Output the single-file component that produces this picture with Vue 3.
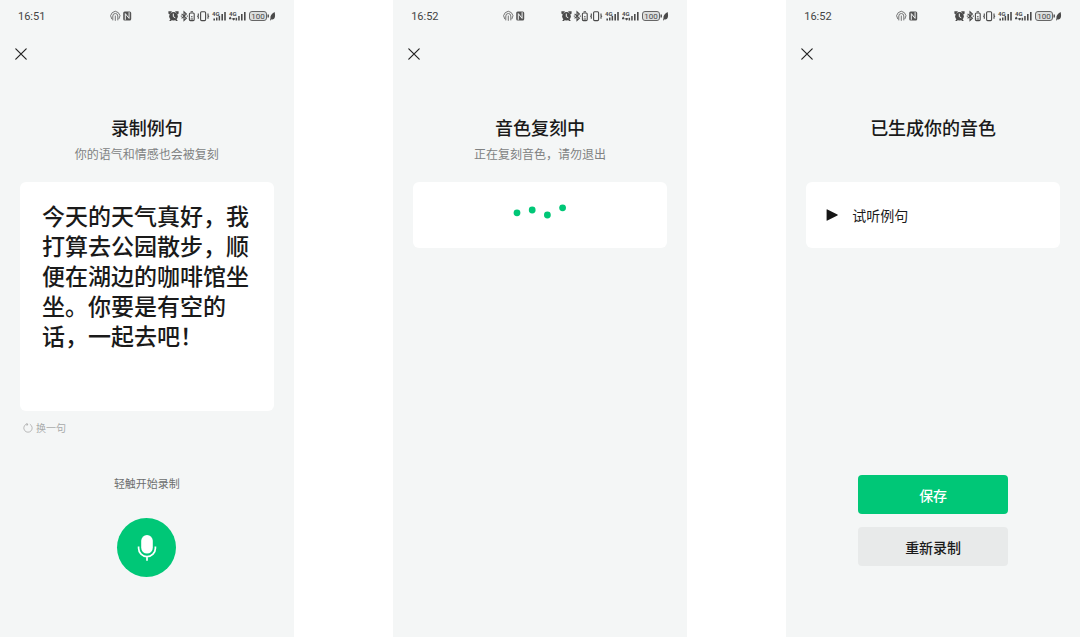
<script setup>
const screens = [
  { id: 'record', time: '16:51', title: '录制例句', subtitle: '你的语气和情感也会被复刻' },
  { id: 'loading', time: '16:52', title: '音色复刻中', subtitle: '正在复刻音色，请勿退出' },
  { id: 'done', time: '16:52', title: '已生成你的音色', subtitle: '' }
]
const sentence = '今天的天气真好，我打算去公园散步，顺便在湖边的咖啡馆坐坐。你要是有空的话，一起去吧！'
</script>

<template>
  <main class="board">
    <section v-for="s in screens" :key="s.id" class="phone">
      <header class="status">
        <span class="time">{{ s.time }}</span>
        <svg class="left-icons" width="22" height="12" viewBox="0 0 22 12" fill="none" stroke="#666" stroke-width="0.9" stroke-linecap="round">
          <path d="M1.6 8.8A4.6 4.6 0 1 1 9 8.8" />
          <path d="M2.8 10V6a2.5 2.5 0 0 1 5 0v4" />
          <path d="M5.3 6V10.4" />
          <rect x="13.2" y="1.6" width="8" height="8.8" rx="1.5" fill="#555" stroke="none" />
          <path d="M15.3 9.4V3.6l3.8 4.8V2.6" stroke="#f4f6f6" stroke-width="1" />
        </svg>
        <svg class="right-icons" width="108" height="12" viewBox="0 0 108 12">
          <g fill="#4a4a4a">
            <circle cx="5.5" cy="6.2" r="4.3" />
            <path d="M0.4 3.6V1.2H4L1.4 4.5zM10.6 3.6V1.2H7L9.6 4.5zM1.2 10.9 2.6 9l1.4.8-1 1.1zM9.8 10.9 8.4 9l-1.4.8 1 1.1z" />
            <path d="M5.3 3.6v3l2 1.2" fill="none" stroke="#f4f6f6" stroke-width="1" />
          </g>
          <g fill="none" stroke="#4a4a4a" stroke-width="1.1">
            <path d="M13.6 3.8 18.4 8.2 16 10.4V1.8l2.4 2.2-4.8 4.4" />
            <path d="M12.8 6.1h1M18.8 6.1h1" />
            <rect x="21.4" y="3" width="4.8" height="7.6" rx="1" />
            <path d="M22.6 1.8H25M23 6.8h1.6M22.6 9H25" />
            <rect x="32.6" y="1.8" width="5" height="8.8" rx="1" />
            <path d="M30.3 3.6v2l-.6.6.6.6v2M40 3.6v2l.6.6-.6.6v2" />
          </g>
          <g fill="#4a4a4a">
            <text x="44" y="6" class="net">4G</text>
            <path d="M45.4 8.4h1.6v2.2h-1.6zM48 7.6h1.5v3H48zM50.6 6h1.5v4.6h-1.5zM53.4 4h1.6v6.6h-1.6zM56.2 2h1.6v8.6h-1.6z" />
            <text x="61" y="6" class="net">4G</text>
            <path d="m61 8 1.2-1.4L63.4 8v1.2H61zM64.4 8h2.4v1.4l-1.2 1.2-1.2-1.2zM67.6 7.8h1.5v2.8h-1.5zM70.2 6h1.5v4.6h-1.5zM73 4h1.6v6.6H73zM76 2h1.6v8.6H76z" />
            <rect x="81.5" y="1.5" width="17" height="9" rx="2.5" fill="#dcdede" stroke="#666" />
            <rect x="99.5" y="4.5" width="1.4" height="3" />
            <text x="90" y="9" text-anchor="middle" class="level">100</text>
            <path d="M102.4 8.4c-.2-3 1.4-4.8 4.2-6.4.6 2.4.9 5.8-.9 7-.9.7-1.7.5-2.3.2l-.7 1.4-.6-.3z" />
          </g>
        </svg>
      </header>

      <button class="close" type="button" aria-label="关闭">
        <svg width="12" height="12" viewBox="0 0 12 12" fill="none" stroke="#222" stroke-width="1.2" stroke-linecap="round">
          <path d="M.8.8 11.2 11.2M11.2.8.8 11.2" />
        </svg>
      </button>

      <div class="heading">
        <h1>{{ s.title }}</h1>
        <p>{{ s.subtitle }}</p>
      </div>

      <template v-if="s.id === 'record'">
        <div class="card sentence"><p>{{ sentence }}</p></div>
        <button class="swap" type="button">
          <svg width="10" height="10" viewBox="0 0 10 10" fill="none" stroke="#aaa" stroke-width="0.8" stroke-linecap="round" stroke-linejoin="round">
            <path d="M7.2 1.4A4.2 4.2 0 1 1 3 1.3h1.6M3.6.4l1.2.9-.8 1.2" />
          </svg>
          <span>换一句</span>
        </button>
        <p class="hint">轻触开始录制</p>
        <button class="mic" type="button" aria-label="开始录制">
          <svg width="20" height="28" viewBox="0 0 20 28">
            <rect x="4.2" y="1" width="11.6" height="18.6" rx="5.8" fill="#fff" />
            <path d="M1.6 12.4v1.8a8.4 8.4 0 0 0 16.8 0v-1.8M10 22.6v4.2" fill="none" stroke="#fff" stroke-width="1.7" />
          </svg>
        </button>
      </template>

      <div v-else-if="s.id === 'loading'" class="card short dots">
        <svg width="56" height="16" viewBox="0 0 56 16" fill="#00c777" role="img" aria-label="加载中">
          <circle cx="5" cy="8.8" r="3.4" />
          <circle cx="20.2" cy="6" r="3.4" />
          <circle cx="35.4" cy="11" r="3.4" />
          <circle cx="50.6" cy="3.8" r="3.4" />
        </svg>
      </div>

      <template v-else>
        <button class="card short play" type="button">
          <svg width="12" height="12" viewBox="0 0 12 12" fill="#161616">
            <path d="M.6.8Q.6 0 1.4.4L11.4 5.4q.9.6 0 1.2L1.4 11.6q-.8.4-.8-.4z" />
          </svg>
          <span>试听例句</span>
        </button>
        <div class="actions">
          <button class="save" type="button">保存</button>
          <button class="again" type="button">重新录制</button>
        </div>
      </template>
    </section>
  </main>
</template>

<style>
body {
  margin: 0;
  background: #fff;
}
</style>

<style scoped>
.board {
  display: grid;
  grid-template-columns: repeat(3, 27.2%);
  justify-content: space-between;
  min-height: 100vh;
  font-family: "Noto Sans CJK SC", sans-serif;
  color: #1a1a1a;
}
h1, p {
  margin: 0;
}
button {
  padding: 0;
  border: 0;
  background: none;
  font: inherit;
  color: inherit;
  cursor: pointer;
}
svg {
  display: block;
  flex: none;
}
.phone {
  display: flex;
  flex-direction: column;
  padding: 0 20px;
  background: #f4f6f6;
}
.status {
  display: flex;
  align-items: center;
  height: 32px;
  margin: 0 -2px;
}
.time {
  width: 92px;
  padding-top: 2px;
  font: 11px/16px Roboto, sans-serif;
  color: #444;
}
.right-icons {
  margin-left: auto;
}
.net {
  font: bold 6px Roboto, sans-serif;
}
.level {
  font: 8px Roboto, sans-serif;
}
.close {
  align-self: flex-start;
  margin: 10px -9px 0;
  padding: 6px 4px;
}
.heading {
  height: 67px;
  margin-top: 49px;
  text-align: center;
}
h1 {
  font-size: 18px;
  font-weight: 500;
  line-height: 24px;
}
.heading p {
  margin-top: 5px;
  font-size: 12px;
  line-height: 20px;
  color: #808282;
}
.card {
  border-radius: 6px;
  background: #fff;
}
.sentence {
  min-height: 191px;
  padding: 18px 22px 20px;
  font-size: 23px;
  font-weight: 500;
  line-height: 30px;
}
.short {
  display: flex;
  height: 66px;
}
.dots {
  justify-content: center;
  padding-top: 22px;
  box-sizing: border-box;
}
.play {
  align-items: center;
  gap: 14px;
  padding: 0 20px;
  font-size: 14px;
}
.swap {
  display: flex;
  align-items: center;
  align-self: flex-start;
  gap: 3px;
  margin: 8px 3px 0;
  font-size: 10px;
  line-height: 18px;
  color: #a8aaaa;
}
.hint {
  margin-top: 36px;
  font-size: 11px;
  line-height: 20px;
  text-align: center;
  color: #6c6e6e;
}
.mic {
  display: grid;
  place-items: center;
  align-self: center;
  width: 59px;
  height: 59px;
  margin-top: 25px;
  border-radius: 50%;
  background: #00c777;
}
.actions {
  display: flex;
  flex-direction: column;
  align-items: center;
  gap: 13px;
  margin-top: auto;
  padding-bottom: 71px;
}
.actions button {
  width: 150px;
  height: 39px;
  border-radius: 4px;
  font-size: 14px;
  font-weight: 500;
}
.actions .save {
  background: #00c777;
  color: #fff;
}
.actions .again {
  background: #e8eaea;
}
</style>
